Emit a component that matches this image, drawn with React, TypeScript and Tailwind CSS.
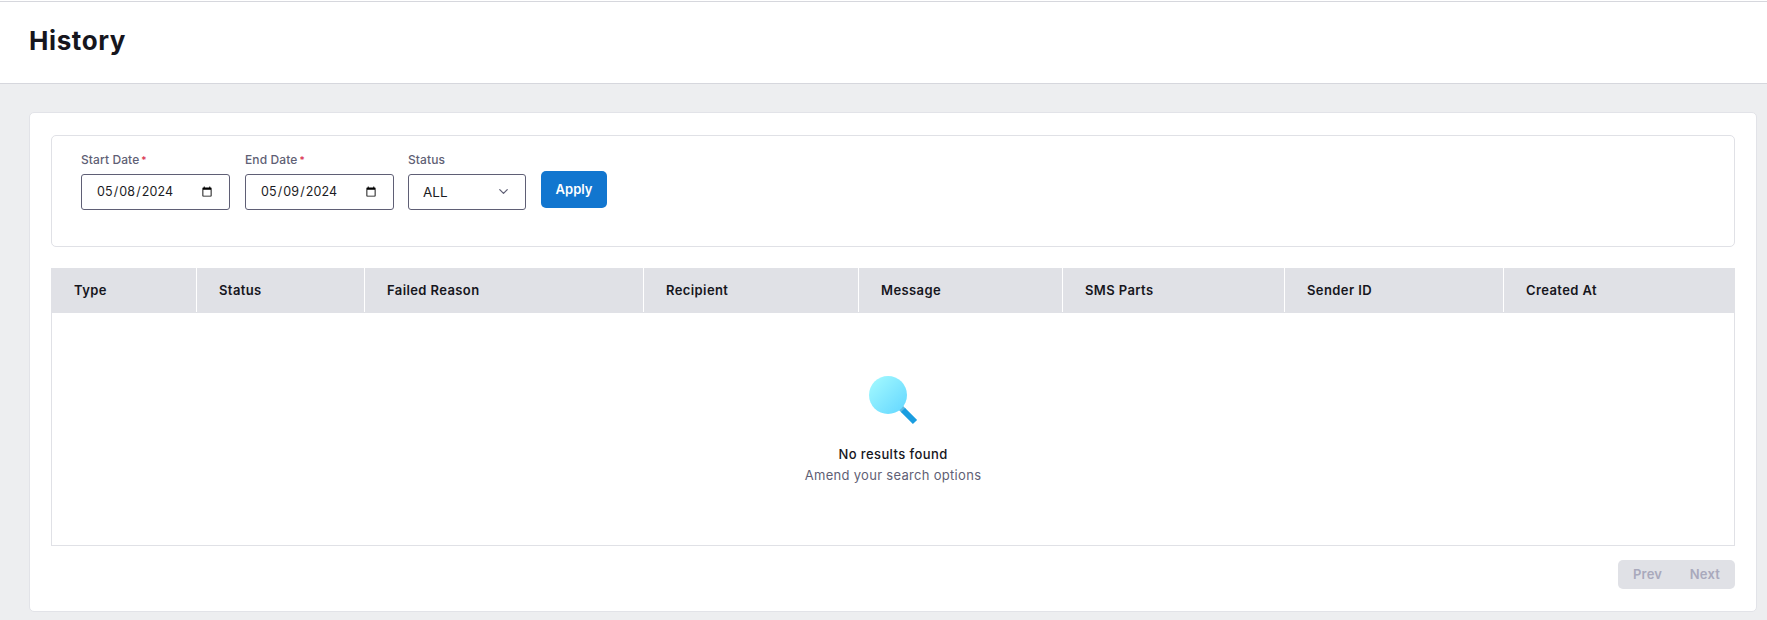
import { ChevronDown } from "lucide-react";

const columns = [
  { label: "Type", width: "w-[145px]", pad: "pl-[23px]" },
  { label: "Status", width: "w-[168px]", pad: "pl-[22px]" },
  { label: "Failed Reason", width: "w-[279px]", pad: "pl-[22px]" },
  { label: "Recipient", width: "w-[215px]", pad: "pl-[22px]" },
  { label: "Message", width: "w-[204px]", pad: "pl-[22px]" },
  { label: "SMS Parts", width: "w-[222px]", pad: "pl-[22px]" },
  { label: "Sender ID", width: "w-[219px]", pad: "pl-[22px]" },
  { label: "Created At", width: "flex-1", pad: "pl-[22px]" },
];

const DateField = ({ label, value }: { label: string; value: string }) => (
  <div className="flex flex-col w-[149px]">
    <label className="h-[22px] text-[12px] leading-[16px] font-medium text-[#5f5f75] tracking-[0.1px]">
      {label}
      <span className="text-[#d92d4b] ml-[2px] text-[10px]">*</span>
    </label>
    <input
      type="date"
      defaultValue={value}
      className="h-[36px] w-full rounded-[3px] border border-[#5f5f75] bg-white pl-[14px] pr-[14px] text-[12.5px] tracking-[0.1px] text-[#1c1c24]"
    />
  </div>
);

const SearchIcon = () => (
  <svg width="50" height="50" viewBox="0 0 50 50">
    <defs>
      <linearGradient id="lens" x1="0" y1="0" x2="1" y2="1">
        <stop offset="0" stopColor="#a6fbff" />
        <stop offset="1" stopColor="#62d6ff" />
      </linearGradient>
    </defs>
    <line x1="32" y1="32" x2="35.5" y2="35.5" stroke="#5cb8e0" strokeWidth="6" />
    <line x1="35" y1="35" x2="47" y2="47" stroke="#1a9de0" strokeWidth="6" />
    <circle cx="20" cy="20" r="19" fill="url(#lens)" />
  </svg>
);

export default function App() {
  return (
    <div className="h-[620px] overflow-hidden bg-[#edeef0] font-['Inter',sans-serif] text-[#16161d]">
      <div className="bg-white pt-[1px]">
        <header className="flex h-[83px] items-center border-t border-b border-[#d6d7dd] bg-white pl-[29px] pb-[4px]">
          <h1 className="text-[26px] font-bold tracking-[0.6px]">History</h1>
        </header>
      </div>

      <main className="pl-[29px] pr-[10px] pt-[28px]">
        <div className="h-[500px] rounded-[5px] border border-[#e2e3e8] bg-white px-[21px] pt-[22px]">
          <section className="flex h-[112px] items-start gap-[15px] rounded-[5px] border border-[#e0e1e6] pl-[29px] pt-[16px]">
            <DateField label="Start Date" value="2024-05-08" />
            <DateField label="End Date" value="2024-05-09" />
            <div className="flex w-[118px] flex-col -ml-[1px]">
              <label className="h-[22px] text-[12px] leading-[16px] font-medium text-[#5f5f75] tracking-[0.1px]">Status</label>
              <div className="relative">
                <select className="h-[36px] w-full appearance-none rounded-[3px] border border-[#5f5f75] bg-white pl-[14px] text-[13.5px] text-[#1c1c24]">
                  <option>ALL</option>
                </select>
                <ChevronDown className="pointer-events-none absolute right-[15px] top-[10px] h-[15px] w-[15px] text-[#5f5f75]" />
              </div>
            </div>
            <button className="mt-[19px] h-[37px] w-[66px] rounded-[5px] bg-[#1276cf] text-[13px] font-semibold text-white">
              Apply
            </button>
          </section>

          <section className="mt-[21px]">
            <div className="flex h-[45px] bg-[#e0e1e6]">
              {columns.map((col, i) => (
                <div
                  key={col.label}
                  className={`${col.width} ${col.pad} flex items-center pt-[1px] text-[13px] font-semibold tracking-[0.4px] mb-[1px] ${
                    i > 0 ? "border-l border-white" : ""
                  }`}
                >
                  {col.label}
                </div>
              ))}
            </div>
            <div className="flex h-[233px] flex-col items-center border-x border-b border-[#e0e1e6] pt-[62px]">
              <SearchIcon />
              <p className="mt-[19px] text-[13px] font-medium leading-[20px] tracking-[0.4px]">No results found</p>
              <p className="mt-[1px] text-[13px] leading-[20px] text-[#5f5f75] tracking-[0.3px]">Amend your search options</p>
            </div>
          </section>

          <div className="mt-[14px] flex justify-end">
            <div className="flex h-[29px] w-[117px] items-center justify-between rounded-[5px] bg-[#e0e1e6] px-[15px] text-[13px] font-semibold text-[#a9a9bc] tracking-[0.2px]">
              <button>Prev</button>
              <button>Next</button>
            </div>
          </div>
        </div>
      </main>
    </div>
  );
}
